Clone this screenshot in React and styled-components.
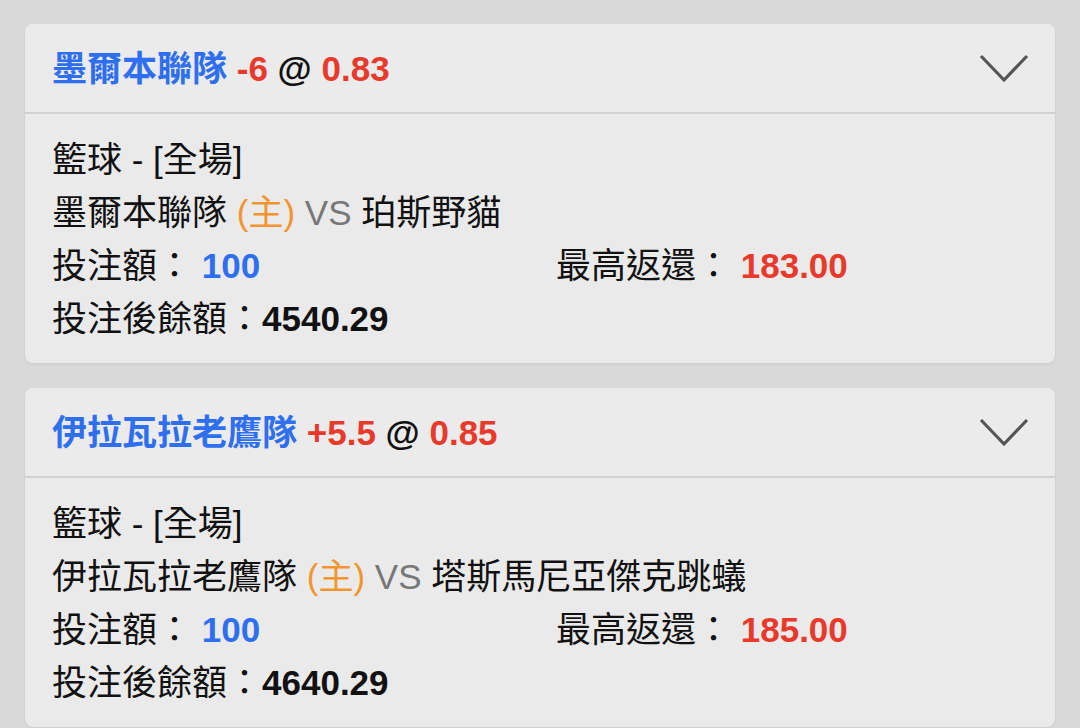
import React from "react";
import styled, { createGlobalStyle } from "styled-components";

const Global = createGlobalStyle`
  html, body { margin: 0; padding: 0; background: #d9d9d9; }
  body {
    font-family: "Liberation Sans", "Noto Sans CJK TC", sans-serif;
    color: #111;
  }
`;

const Page = styled.div`
  padding: 24px 25px;
  display: flex;
  flex-direction: column;
  gap: 25px;
  min-height: 728px;
  box-sizing: border-box;
`;

const Card = styled.div`
  background: #eaeaea;
  border-radius: 8px;
  box-shadow: 0 1px 3px rgba(0, 0, 0, 0.08);
  overflow: hidden;
`;

const Header = styled.div`
  height: 88px;
  display: flex;
  align-items: center;
  justify-content: space-between;
  padding: 0 26px 0 27px;
  border-bottom: 2px solid #d2d2d2;
  background: #ebebeb;
`;

const Title = styled.div`
  font-size: 35px;
  font-weight: 700;
  white-space: nowrap;
  margin-bottom: 6px;
`;

const Tone = styled.span`
  color: ${(p) => p.$c};
`;

const Chevron = styled.svg`
  width: 50px;
  height: 30px;
  display: block;
`;

const Body = styled.div`
  padding: 19px 27px 18px;
  font-size: 35px;
  line-height: 53px;
`;

const Line = styled.div`
  white-space: nowrap;
`;

const Grid = styled.div`
  display: grid;
  grid-template-columns: 504px 1fr;
`;

const Num = styled.span`
  font-weight: 700;
  color: ${(p) => p.$c || "#111"};
`;

const C = {
  blue: "#2e6ff0",
  red: "#e8392b",
  orange: "#f2952f",
  gray: "#777",
};

function BetCard({ team, handicap, odds, away, stake, ret, balance }) {
  return (
    <Card>
      <Header>
        <Title>
          <Tone $c={C.blue}>{team}</Tone> <Tone $c={C.red}>{handicap}</Tone>{" "}
          <Tone $c="#111">@</Tone> <Tone $c={C.red}>{odds}</Tone>
        </Title>
        <Chevron viewBox="0 0 50 30">
          <polyline
            points="2,3 25,27 48,3"
            fill="none"
            stroke="#555"
            strokeWidth="3.2"
          />
        </Chevron>
      </Header>
      <Body>
        <Line>籃球 - [全場]</Line>
        <Line>
          {team} <Tone $c={C.orange}>(主)</Tone> <Tone $c={C.gray}>VS</Tone> {away}
        </Line>
        <Grid>
          <Line>
            投注額： <Num $c={C.blue}>{stake}</Num>
          </Line>
          <Line>
            最高返還： <Num $c={C.red}>{ret}</Num>
          </Line>
        </Grid>
        <Line>
          投注後餘額：<Num>{balance}</Num>
        </Line>
      </Body>
    </Card>
  );
}

export default function App() {
  return (
    <>
      <Global />
      <Page>
        <BetCard
          team="墨爾本聯隊"
          handicap="-6"
          odds="0.83"
          away="珀斯野貓"
          stake="100"
          ret="183.00"
          balance="4540.29"
        />
        <BetCard
          team="伊拉瓦拉老鷹隊"
          handicap="+5.5"
          odds="0.85"
          away="塔斯馬尼亞傑克跳蟻"
          stake="100"
          ret="185.00"
          balance="4640.29"
        />
      </Page>
    </>
  );
}
